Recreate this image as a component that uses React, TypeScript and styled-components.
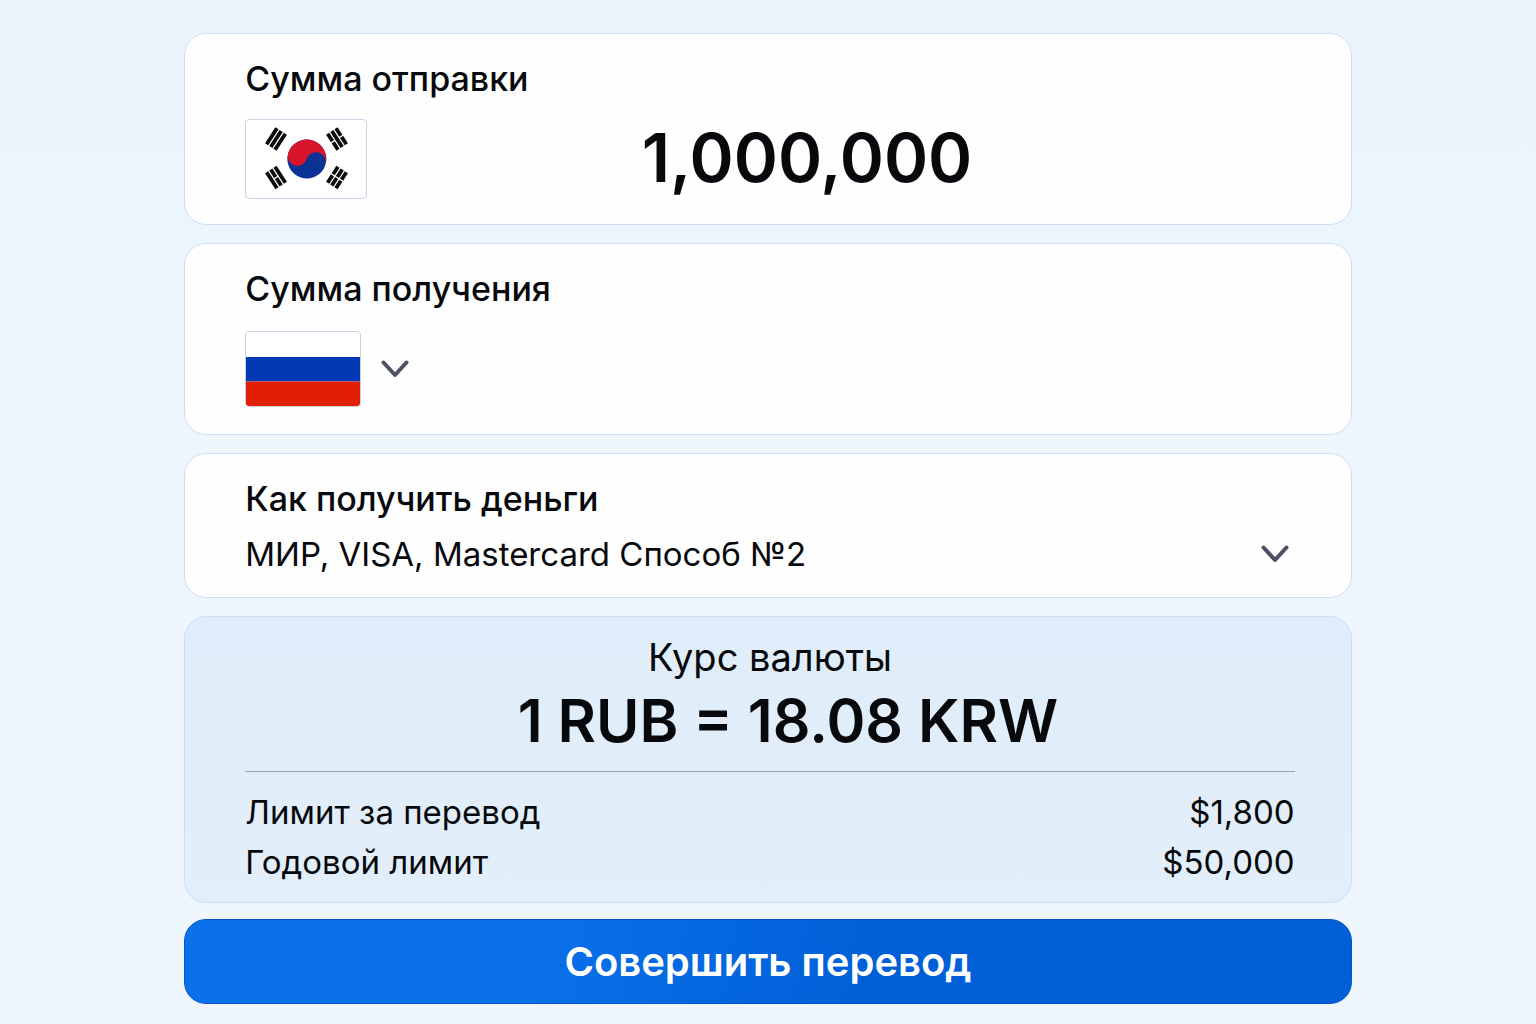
import React, { useState } from "react";
import styled, { createGlobalStyle } from "styled-components";

const GlobalStyle = createGlobalStyle`
  *, *::before, *::after { box-sizing: border-box; }
  body {
    margin: 0;
    min-height: 100vh;
    background: linear-gradient(180deg, #ebf4fd 0%, #eff6fd 60%, #f0f6fd 100%);
    color: #07090c;
    font-family: Inter, "Noto Sans", sans-serif;
  }
  input, select, button { font: inherit; color: inherit; }
`;

const Page = styled.main`
  width: 76%;
  margin: 0 auto;
  padding: 33px 0 20px;
`;

const Form = styled.form`
  display: flex;
  flex-direction: column;
  gap: 18px;
`;

const Card = styled.section<{ $tinted?: boolean }>`
  padding: 23px 56px 25px 60px;
  border: 1px solid #cadff6;
  border-radius: 22px;
  background: ${(p) => (p.$tinted ? "linear-gradient(180deg, #e0edfa, #e2effa)" : "#fefefe")};
`;

const Label = styled.label`
  display: block;
  font-size: 34px;
  line-height: 44px;
  font-weight: 500;
`;

const AmountRow = styled.div`
  display: flex;
  align-items: center;
  gap: 24px;
  height: 80px;
  margin-top: 18px;
`;

const FlagFrame = styled.span<{ $width: number; $height: number }>`
  display: block;
  flex: none;
  width: ${(p) => p.$width}px;
  height: ${(p) => p.$height}px;
  border: 1px solid #c9d2e2;
  border-radius: 4px;
  overflow: hidden;
  background: #fff;

  svg { display: block; width: 100%; height: 100%; }
`;

const AmountInput = styled.input`
  flex: 1;
  min-width: 0;
  height: 80px;
  padding: 0 72px 4px 0;
  border: 0;
  outline: 0;
  background: transparent;
  font-size: 67px;
  font-weight: 600;
  text-align: center;
`;

const CountryPicker = styled.div`
  position: relative;
  display: flex;
  align-items: center;
  gap: 20px;
`;

const CountrySelect = styled.select`
  position: absolute;
  inset: 0;
  width: 100%;
  height: 100%;
  opacity: 0;
  cursor: pointer;
`;

const MethodCard = styled(Card)`
  padding-top: 23px;
  padding-bottom: 16px;
`;

const MethodRow = styled.div`
  display: flex;
  align-items: center;
  margin-top: 6px;
  padding-right: 6px;
`;

const MethodSelect = styled.select`
  flex: 1;
  min-width: 0;
  height: 54px;
  margin-right: -28px;
  padding: 0 28px 0 0;
  border: 0;
  outline: 0;
  appearance: none;
  background: transparent;
  font-size: 33px;
  cursor: pointer;
`;

const ChevronIcon = styled.svg`
  flex: none;
  width: 28px;
  height: 18px;
  pointer-events: none;
`;

const RateCard = styled(Card)`
  padding-top: 18px;
  padding-bottom: 15px;
`;

const RateTitle = styled.h2`
  margin: 0;
  font-size: 38px;
  line-height: 44px;
  font-weight: 400;
  text-align: center;
`;

const RateValue = styled.p`
  margin: 0;
  padding: 2px 0 10px 36px;
  font-size: 59px;
  line-height: 80px;
  font-weight: 600;
  text-align: center;
`;

const Limits = styled.dl`
  margin: 0;
  padding-top: 15px;
  border-top: 1px solid #97a5b4;
`;

const LimitRow = styled.div`
  display: flex;
  justify-content: space-between;
  font-size: 33px;
  line-height: 50px;

  dt, dd { margin: 0; }
`;

const SubmitButton = styled.button`
  height: 85px;
  margin-top: -2px;
  border: 1px solid #0454c4;
  border-radius: 22px;
  background: linear-gradient(100deg, #0a71ea 0%, #0a70e9 30%, #005fd7 60%, #005fd7 100%);
  color: #fff;
  font-size: 40px;
  font-weight: 600;
  cursor: pointer;
`;

function Chevron() {
  return (
    <ChevronIcon viewBox="0 0 28 18" fill="none" stroke="#4a5166" strokeWidth="4" strokeLinecap="round" strokeLinejoin="round" aria-hidden="true">
      <path d="M2.500 2.500L14 15L25.500 2.500" />
    </ChevronIcon>
  );
}

type Bars = [boolean, boolean, boolean];

function Trigram({ x, y, angle, solid }: { x: number; y: number; angle: number; solid: Bars }) {
  return (
    <g transform={`translate(${x} ${y}) rotate(${angle})`} stroke="#0b0b0d" strokeWidth="3.8">
      {solid.map((full, i) => (
        <path key={i} d={full ? "M-9.500 0H9.500" : "M-9.500 0H-.7M.7 0H9.500"} transform={`translate(0 ${(i - 1) * 5})`} />
      ))}
    </g>
  );
}

function KoreaFlag() {
  return (
    <FlagFrame $width={122} $height={80}>
      <svg viewBox="1 1 120 78" role="img" aria-label="Южная Корея">
        <g transform="translate(61.800 40) rotate(18)">
          <circle r="19.500" fill="#0a3295" />
          <path d="M-19.500 0A19.500 19.500 0 0 1 19.500 0A9.750 9.750 0 0 0 0 0A9.750 9.750 0 0 1 -19.500 0Z" fill="#d8142a" />
        </g>
        <Trigram x={31} y={20} angle={-57} solid={[true, true, true]} />
        <Trigram x={92} y={20} angle={57} solid={[false, true, false]} />
        <Trigram x={31} y={58.5} angle={57} solid={[true, false, true]} />
        <Trigram x={92} y={58.5} angle={-57} solid={[false, false, false]} />
      </svg>
    </FlagFrame>
  );
}

function RussiaFlag() {
  return (
    <FlagFrame $width={116} $height={76}>
      <svg viewBox="0 0 114 74" preserveAspectRatio="none" role="img" aria-label="Россия">
        <path d="M0 0H114V25H0Z" fill="#fff" />
        <path d="M0 25H114V49.500H0Z" fill="#0238b4" />
        <path d="M0 49.500H114V74H0Z" fill="#e11f05" />
      </svg>
    </FlagFrame>
  );
}

export default function App() {
  const [amount, setAmount] = useState("1,000,000");
  const [received, setReceived] = useState("");

  return (
    <>
      <GlobalStyle />
      <Page>
        <Form onSubmit={(e) => e.preventDefault()}>
          <Card>
            <Label htmlFor="send">Сумма отправки</Label>
            <AmountRow>
              <KoreaFlag />
              <AmountInput id="send" inputMode="numeric" value={amount} onChange={(e) => setAmount(e.target.value)} />
            </AmountRow>
          </Card>

          <Card>
            <Label htmlFor="receive">Сумма получения</Label>
            <AmountRow>
              <CountryPicker>
                <RussiaFlag />
                <Chevron />
                <CountrySelect aria-label="Россия">
                  <option>Россия</option>
                </CountrySelect>
              </CountryPicker>
              <AmountInput id="receive" inputMode="numeric" value={received} onChange={(e) => setReceived(e.target.value)} />
            </AmountRow>
          </Card>

          <MethodCard>
            <Label htmlFor="method">Как получить деньги</Label>
            <MethodRow>
              <MethodSelect id="method">
                <option>МИР, VISA, Mastercard Способ №2</option>
              </MethodSelect>
              <Chevron />
            </MethodRow>
          </MethodCard>

          <RateCard $tinted>
            <RateTitle>Курс валюты</RateTitle>
            <RateValue>1 RUB = 18.08 KRW</RateValue>
            <Limits>
              <LimitRow>
                <dt>Лимит за перевод</dt>
                <dd>$1,800</dd>
              </LimitRow>
              <LimitRow>
                <dt>Годовой лимит</dt>
                <dd>$50,000</dd>
              </LimitRow>
            </Limits>
          </RateCard>

          <SubmitButton type="submit">Совершить перевод</SubmitButton>
        </Form>
      </Page>
    </>
  );
}
